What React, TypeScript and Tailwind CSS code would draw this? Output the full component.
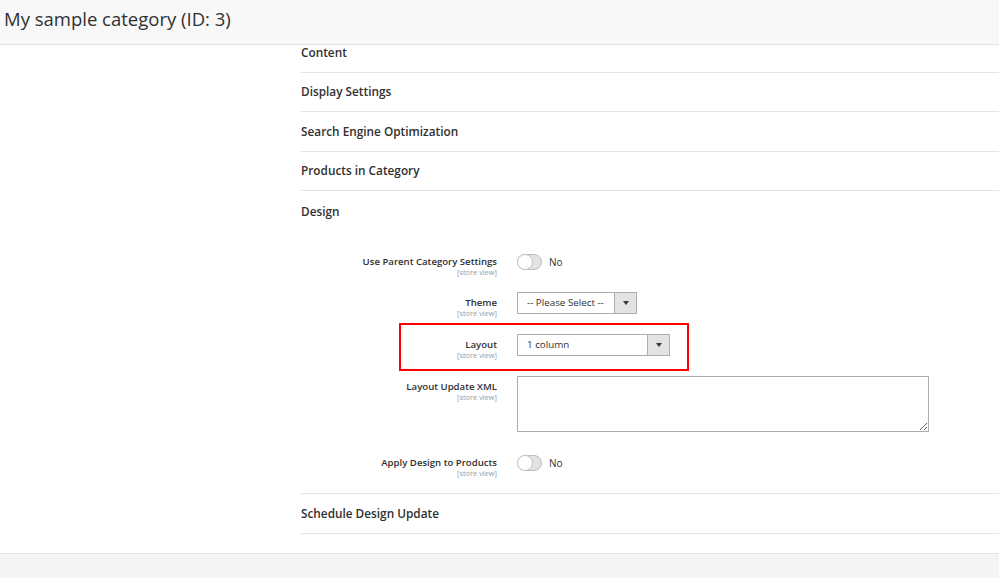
import React from "react";

const font = { fontFamily: '"Open Sans", "Noto Sans", sans-serif' };

function Section({ title, h = "h-[40px]" }: { title: string; h?: string }) {
  return (
    <div className={`${h} flex items-center border-b border-[#e3e3e3]`}>
      <span className="text-[11.8px] font-semibold text-[#303030]">{title}</span>
    </div>
  );
}

function Label({ text, pt }: { text: string; pt: string }) {
  return (
    <div className={`w-[196px] shrink-0 flex flex-col items-end ${pt}`}>
      <span className="text-[9.6px] leading-[12px] font-semibold text-[#303030]">{text}</span>
      <span className="text-[7.4px] leading-[9px] text-[#9a9a9a]">[store view]</span>
    </div>
  );
}

function Toggle() {
  return (
    <div className="flex items-center h-[20px] gap-[7px]">
      <div className="w-[25px] h-[16px] rounded-full border border-[#bdbdbd] bg-[#e3e3e3] relative">
        <div className="absolute left-[-1px] top-[-1px] w-[16px] h-[16px] rounded-full bg-white border border-[#c4c4c4]" />
      </div>
      <span className="text-[10px] text-[#303030]">No</span>
    </div>
  );
}

function Select({ value, w }: { value: string; w: string }) {
  return (
    <div className={`${w} h-[22px] flex border border-[#adadad] bg-white`}>
      <div className="flex-1 flex items-center pl-[9px] text-[9.8px] text-[#303030]">{value}</div>
      <div className="w-[22px] bg-[#e3e3e3] border-l border-[#adadad] flex items-center justify-center">
        <div className="w-0 h-0 border-l-[3px] border-r-[3px] border-t-[4px] border-l-transparent border-r-transparent border-t-[#41362f]" />
      </div>
    </div>
  );
}

export default function App() {
  return (
    <div className="w-[999px] h-[578px] bg-white overflow-hidden relative" style={font}>
      <div className="h-[45px] bg-[#f8f8f8] border-b border-[#e3e3e3] flex items-center pl-[4px]">
        <h1 className="text-[18.5px] text-[#303030] font-normal leading-none pb-[6px]">My sample category (ID: 3)</h1>
      </div>
      <div className="flex">
        <div className="w-[301px] shrink-0" />
        <div className="flex-1">
          <div className="h-[28px] border-b border-[#e3e3e3]">
            <span className="block text-[11.8px] leading-[14px] font-semibold text-[#303030]">Content</span>
          </div>
          <Section title="Display Settings" h="h-[39px]" />
          <Section title="Search Engine Optimization" />
          <Section title="Products in Category" h="h-[39px]" />
          <div className="border-b border-[#e3e3e3] pb-[20px]">
            <div className="h-[41px] flex items-center">
              <span className="text-[11.8px] font-semibold text-[#303030]">Design</span>
            </div>
            <div className="pt-[20px] flex flex-col gap-[20px]">
              <div className="flex gap-[20px] h-[20px]">
                <Label text="Use Parent Category Settings" pt="pt-[4px]" />
                <Toggle />
              </div>
              <div className="flex gap-[20px] h-[22px]">
                <Label text="Theme" pt="pt-[5px]" />
                <Select value="-- Please Select --" w="w-[120px]" />
              </div>
              <div className="flex gap-[20px] h-[22px] relative">
                <Label text="Layout" pt="pt-[5px]" />
                <Select value="1 column" w="w-[153px]" />
                <div className="absolute left-[98px] top-[-11px] w-[290px] h-[48px] border-2 border-[#ff0000] pointer-events-none" />
              </div>
              <div className="flex gap-[20px] h-[56px]">
                <Label text="Layout Update XML" pt="pt-[5px]" />
                <textarea className="w-[412px] h-[56px] border border-[#adadad] bg-white outline-none" />
              </div>
              <div className="flex gap-[20px] h-[20px] mt-[1px]">
                <Label text="Apply Design to Products" pt="pt-[4px]" />
                <Toggle />
              </div>
            </div>
          </div>
          <Section title="Schedule Design Update" />
        </div>
      </div>
      <div className="absolute left-0 right-0 top-[553px] bottom-0 bg-[#f4f4f4] border-t border-[#e3e3e3]" />
    </div>
  );
}
